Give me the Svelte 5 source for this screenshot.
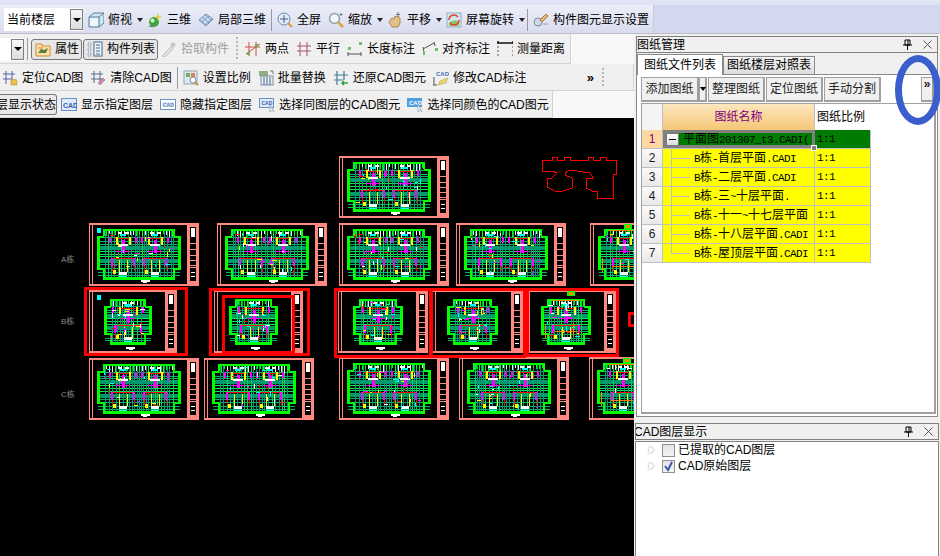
<script>
  const ic = {
    cube: '<path d="M1 5 6 1h10v10l-5 4H1z" fill="#cfe6f5" stroke="#5a7f98"/><path d="M1 5h10v10M11 5l5-4" fill="none" stroke="#5a7f98"/><path d="M2 6h8v8H2z" fill="#eef7fc"/>',
    sphere: '<circle cx="7" cy="10" r="5" fill="#3fa63f"/><circle cx="5.5" cy="8.5" r="2" fill="#d8f5c8"/><path d="M11 1l1 3 3 1-3 1-1 3-1-3-3-1 3-1z" fill="#e8c84a"/><path d="M2 14l4 1" stroke="#667" />',
    diamond: '<path d="M1 8 8 2l7 5-7 7z" fill="#c8dcf2" stroke="#6f8fb5"/><path d="M4 5l7 6M7 3l6 5M2 8l6 5M11 4l-7 6M14 7l-6 5" stroke="#7e9cc2" fill="none"/>',
    full: '<circle cx="7" cy="7" r="6" fill="#e3edf8" stroke="#6b87ab"/><path d="M7 3v8M3 7h8" stroke="#3d5f8f"/><path d="M11 11l4 4" stroke="#d99a3a" stroke-width="2"/>',
    zoom: '<circle cx="6.500" cy="6.500" r="5" fill="#f2f6fa" stroke="#8fa0b0" stroke-width="1.500"/><path d="M10.500 10.500l4.500 4.500" stroke="#d8a830" stroke-width="2.500"/><path d="M13 1v3M11.500 2.500h3" stroke="#5a7fa8"/>',
    hand: '<path d="M2 10l3-4 2 1 1-3 2 1 1-1 2 2v5l-2 4H5z" fill="#e3c28a" stroke="#a8874f"/><path d="M11 0v5M9 2.500h4" stroke="#667788"/>',
    rotate: '<rect x="1" y="1" width="14" height="14" fill="#cfe7f2" stroke="#8fb0c2"/><path d="M3 11c3-3 7-3 10-1v4H3z" fill="#8fc56a"/><path d="M3 8a5 5 0 0 1 9-3M13 8a5 5 0 0 1-9 3" fill="none" stroke="#e0452c" stroke-width="1.500"/>',
    wand: '<circle cx="5" cy="10" r="4" fill="#cfd8e6" stroke="#7d8ca3"/><path d="M7 8l6-6 2 2-6 6z" fill="#e8b878" stroke="#a5763d"/><path d="M10 12h5" stroke="#999"/>',
    prop: '<path d="M1 3h6v2h8v10H1z" fill="#fbe1ad" stroke="#d88a28"/><path d="M3 12l3-4 3 1 4-2-2 5z" fill="#5b7f3b"/><path d="M3 7h5" stroke="#d88a28"/>',
    list: '<path d="M1 2h3v3H1zM1 7h3v3H1zM1 12h3v3H1z" fill="none" stroke="#7c8ea3" stroke-dasharray="1 1"/><rect x="7" y="1" width="8" height="14" fill="#eef3fa" stroke="#49688f"/><path d="M9 4h4M9 7h4M9 10h4M9 13h4" stroke="#49688f"/>',
    drop: '<path d="M2 14l8-8 2 2-8 8H2z" fill="#e4e4e4" stroke="#bdbdbd"/><path d="M9 4l3-3 3 3-3 3z" fill="#c6c6c6"/>',
    two: '<path d="M1 13 15 3M4 1v14M11 1v14M0 6h15" stroke="#c8503c" fill="none"/><rect x="2" y="11" width="3" height="3" fill="#70b050"/><rect x="10" y="3" width="3" height="3" fill="#70b050"/>',
    par: '<path d="M4 1v14M11 1v14M1 5h14M1 10h14" stroke="#a8506c" fill="none"/>',
    len: '<path d="M1 11v4M14 11v4M1 13h13" stroke="#555" fill="none"/><rect x="1" y="6" width="3" height="3" fill="#70c070"/><rect x="12" y="1" width="3" height="3" fill="#70c070"/>',
    align: '<path d="M1 8l11-6M2 11 1 6M13 5l-1-4" stroke="#555" fill="none"/><rect x="1" y="11" width="2" height="3" fill="#70c070"/><rect x="13" y="7" width="3" height="3" fill="#70c070"/>',
    meas: '<path d="M1 0v3M16 0v3M1 2h15" stroke="#111" stroke-width="1.500" fill="none"/><path d="M1 5v11M16 5v11" stroke="#555" stroke-dasharray="2 2"/>',
    loc: '<path d="M4 1v13M10 1v8M1 4h12M1 9h9" stroke="#5a5fa8" fill="none"/><path d="M9 15v-5h1v-1l1 1 1-1 1 1 1-1 1 2v4z" fill="#e8c050" stroke="#b08a2a" stroke-width=".5"/>',
    clr: '<path d="M4 1v12M10 1v12M1 4h12M1 9h12" stroke="#4f6f8f" fill="none"/><path d="M8 13l5-5 2 2-5 5z" fill="#d58ab0" stroke="#8a5f7a" stroke-width=".5"/>',
    scale: '<rect x="1" y="1" width="13" height="13" fill="#dbe8f2" stroke="#8da4b8"/><rect x="3" y="3" width="4" height="4" fill="#6db05a"/><rect x="8" y="3" width="4" height="4" fill="#e0805a"/><circle cx="10" cy="10" r="3" fill="#fff" stroke="#7d8ca3"/><path d="M12 12l3 3" stroke="#d09030" stroke-width="2"/>',
    batch: '<rect x="1" y="1" width="9" height="5" fill="#8fb080"/><rect x="3" y="6" width="12" height="9" fill="#e8eef4" stroke="#7d8ca3"/><path d="M6 7v8M9 7v8M12 7v8" stroke="#49688f"/><path d="M12 1h3v3" fill="none" stroke="#777"/>',
    rest: '<path d="M4 1v14M11 1v9M1 5h14M1 10h9" stroke="#3f7f95" stroke-width="1.200" fill="none"/><path d="M15 13H9m2-2-2 2 2 2" fill="none" stroke="#2f9f3f" stroke-width="1.500"/>',
    mod: '<text x="3" y="6" font-size="6" font-weight="700" fill="#3f6fc0" font-family="Liberation Sans">CAD</text><path d="M1 7v8M0 15h4" stroke="#555" fill="none"/><path d="M5 15l2-4 8-3-2 5z" fill="#f0d070" stroke="#b09a50" stroke-width=".5"/>',
    cadA: '<rect x=".5" y="1.500" width="15" height="12" fill="#dfeafa" stroke="#6a8fc0"/><text x="2" y="11" font-size="7" font-weight="700" fill="#2f5fb0" font-family="Liberation Sans">CAD</text>',
    cadB: '<rect x=".5" y="2.500" width="15" height="10" fill="#fff" stroke="#6a8fc0"/><rect x="2" y="5" width="12" height="5" fill="#dfeafa"/><text x="3" y="9.500" font-size="5" font-weight="700" fill="#5f7fb0" font-family="Liberation Sans">CAD</text>',
    cadC: '<rect x=".5" y="1.500" width="14" height="9" fill="#dfeafa" stroke="#6a8fc0"/><text x="2.500" y="8" font-size="5" font-weight="700" fill="#2f5fb0" font-family="Liberation Sans">CAD</text><path d="M11 8v7l2-2 2 2z" fill="#fff" stroke="#8a9aaa" stroke-width=".7"/>',
    cadD: '<rect x="0" y="1" width="15" height="9" fill="#4f9fe0"/><text x="2" y="8" font-size="6" font-weight="700" fill="#fff" font-family="Liberation Sans">CAD</text><path d="M11 7v8l2-2 2 2z" fill="#fff" stroke="#8a9aaa" stroke-width=".7"/>'
  };

  const row1 = [
    { i: 'cube', t: '俯视', caret: true },
    { i: 'sphere', t: '三维' },
    { i: 'diamond', t: '局部三维' },
    { sep: true },
    { i: 'full', t: '全屏' },
    { i: 'zoom', t: '缩放', caret: true },
    { i: 'hand', t: '平移', caret: true },
    { i: 'rotate', t: '屏幕旋转', caret: true },
    { sep: true },
    { i: 'wand', t: '构件图元显示设置' }
  ];
  const row2 = [
    { i: 'two', t: '两点' },
    { i: 'par', t: '平行' },
    { i: 'len', t: '长度标注' },
    { i: 'align', t: '对齐标注' },
    { i: 'meas', t: '测量距离' }
  ];
  const row3 = [
    { i: 'loc', t: '定位CAD图' },
    { i: 'clr', t: '清除CAD图' },
    { sep: true },
    { i: 'scale', t: '设置比例' },
    { i: 'batch', t: '批量替换' },
    { i: 'rest', t: '还原CAD图元' },
    { i: 'mod', t: '修改CAD标注' }
  ];
  const row4 = [
    { i: 'cadA', t: '显示指定图层' },
    { i: 'cadB', t: '隐藏指定图层' },
    { i: 'cadC', t: '选择同图层的CAD图元' },
    { i: 'cadD', t: '选择同颜色的CAD图元' }
  ];

  const drawings = [
    { n: '平面图201307_t3.CADI(', r: '1:1' },
    { n: 'B栋-首层平面.CADI', r: '1:1' },
    { n: 'B栋-二层平面.CADI', r: '1:1' },
    { n: 'B栋-三~十层平面.', r: '1:1' },
    { n: 'B栋-十一~十七层平面', r: '1:1' },
    { n: 'B栋-十八层平面.CADI', r: '1:1' },
    { n: 'B栋-屋顶层平面.CADI', r: '1:1' }
  ];

  // split a label so latin runs get the narrow mono of the grid
  const parts = (s) => s.split(/([\x00-\x7f]+)/).filter(Boolean);
  const isLatin = (s) => /^[\x00-\x7f]/.test(s);

  const PINK = '#ff8880';
  const sheets = [
    { x: 339, y: 156, w: 110, h: 62, seed: 3 },
    { x: 89, y: 223, w: 110, h: 63, seed: 5, offset: true },
    { x: 217, y: 223, w: 110, h: 63, seed: 7 },
    { x: 339, y: 223, w: 110, h: 63, seed: 11 },
    { x: 456, y: 223, w: 110, h: 63, seed: 13 },
    { x: 590, y: 223, w: 110, h: 63, seed: 17, tower: true },
    { x: 89, y: 290, w: 88, h: 63, seed: 19, narrow: true, offset: true },
    { x: 214, y: 290, w: 89, h: 63, seed: 23, narrow: true },
    { x: 338, y: 290, w: 90, h: 63, seed: 29, narrow: true },
    { x: 432, y: 290, w: 91, h: 63, seed: 31, narrow: true },
    { x: 526, y: 290, w: 90, h: 63, seed: 37, narrow: true, tower: true },
    { x: 89, y: 358, w: 110, h: 62, seed: 41 },
    { x: 204, y: 358, w: 110, h: 62, seed: 43 },
    { x: 339, y: 357, w: 110, h: 63, seed: 47 },
    { x: 459, y: 357, w: 110, h: 63, seed: 53 },
    { x: 589, y: 357, w: 110, h: 63, seed: 59, tower: true }
  ];
  const redFrames = [
    [85, 288, 101, 66], [210, 289, 98, 65], [223, 296, 70, 56],
    [335, 289, 95, 67], [431, 289, 93, 67], [527, 289, 90, 66], [629, 313, 6, 12]
  ];
  const outline = '542,160 552,160 552,157 557,157 557,160 564,160 564,157 570,157 570,160 588,160 588,157 593,157 593,160 600,160 600,157 606,157 606,160 616,160 616,174 613,174 613,198 597,198 597,191 592,191 586,188 586,178 593,178 590,173 570,170 565,173 565,175 572,178 572,188 563,191 555,191 547,187 547,178 552,178 557,173 552,171 542,171';

  function build(s) {
    let seed = s.seed * 77;
    const rnd = () => (seed = (seed * 9301 + 49297) % 233280) / 233280;
    const out = [];
    const add = (x, y, w, h, c) => out.push({ x: Math.round(x), y: Math.round(y), w: Math.round(w), h: Math.round(h), c });
    const L = s.narrow ? 15 : 8;
    const R = s.narrow ? s.w - 25 : s.w - 18;
    const B0 = L + 6, B1 = R - 6, T = s.narrow ? 9 : 6, Bt = s.h - (s.narrow ? 10 : 8);
    const wT = T + 7, wB = Bt - 10;
    const midY = (T + Bt) / 2;
    const H = Bt - T;

    // horizontal bands
    add(L + 1, T + H * 0.34, R - L - 2, 4, '#009a68');
    add(L + 1, T + H * 0.62, R - L - 2, 4, '#009a68');
    for (const f of [0.16, 0.24, 0.3, 0.44, 0.5, 0.56, 0.72, 0.8, 0.88, 0.94]) add(L + 1, T + H * f, R - L - 2, 1, f > 0.4 && f < 0.6 ? '#00f050' : '#00b860');
    // vertical walls
    for (let x = B0 + 2; x < B1 - 1; x += 2 + Math.floor(rnd() * 3)) {
      add(x, T + 2, 1, H - 3, rnd() > 0.8 ? '#00d060' : '#009a78');
    }
    // green outline with wings
    add(B0, T, B1 - B0, 2, '#00ff00');
    add(B0, Bt - 1, B1 - B0, 3, '#00ff00');
    add(B0, T, 2, wT - T, '#00ff00');
    add(B1 - 2, T, 2, wT - T, '#00ff00');
    add(B0, wB, 2, Bt - wB, '#00ff00');
    add(B1 - 2, wB, 2, Bt - wB, '#00ff00');
    add(L, wT, B0 - L + 1, 2, '#00ff00');
    add(B1 - 1, wT, R - B1 + 1, 2, '#00ff00');
    add(L, wB, B0 - L + 1, 2, '#00ff00');
    add(B1 - 1, wB, R - B1 + 1, 2, '#00ff00');
    add(L, wT, 3, wB - wT + 2, '#00ff00');
    add(R - 3, wT, 3, wB - wT + 2, '#00ff00');
    // top ticks
    for (let x = B0 + 3; x < B1 - 2; x += 3) add(x, T + 2, 1, 3 + rnd() * 4, rnd() > 0.65 ? '#ffffff' : '#00ff00');

    const centers = s.narrow ? [0.5] : [0.28, 0.72];
    for (const f of centers) {
      const c = B0 + (B1 - B0) * f;
      const rw = s.narrow ? 13 : 11;
      // red unit outlines
      add(c - rw, midY + 4, rw * 2, 1, '#ff0000');
      add(c - rw, midY + 4, 1, 13, '#ff0000');
      add(c + rw, midY + 4, 1, 13, '#ff0000');
      add(c - rw + 2, T + 9, rw * 2 - 4, 1, '#ff0000');
      // magenta walls
      add(c - rw - 3, T + 8, 2, 6, '#ff00ff');
      add(c + rw + 1, T + 8, 2, 6, '#ff00ff');
      add(c - 1, T + 11, 3, 13, '#ff00ff');
      add(c - rw - 1, midY + 4, 2, 8, '#ff00ff');
      add(c + rw - 1, midY + 4, 2, 8, '#ff00ff');
      add(c - 7, midY - 3, 14, 1, '#ff00ff');
      // yellow
      add(c - rw + 4, T + 8, 2, 8, '#ffff00');
      add(c + rw - 5, T + 8, 2, 8, '#ffff00');
      add(c - 4, midY + 6, 1, 12, '#ffff00');
      add(c + 4, midY + 6, 1, 12, '#ffff00');
      add(c - rw + 1, Bt - 8, 3, 4, '#ffff00');
      // white fixtures
      add(c - 5, T + 3, 4, 2, '#ffffff');
      add(c + 2, T + 3, 4, 2, '#ffffff');
      add(c - 5, T + 15, 10, 2, '#ffffff');
      add(c - 4, Bt - 6, 8, 3, '#ffffff');
      // cyan stairs
      add(c - 3, T + 5, 6, 2, '#00ffff');
      add(c - 4, Bt - 2, 8, 1, '#00ffff');
    }
    // scattered details
    const bits = ['#ff00ff', '#ffff00', '#ff0000', '#ffffff', '#00ffff'];
    for (let n = 0; n < 22; n++) {
      const vert = rnd() > 0.5;
      add(B0 + rnd() * (B1 - B0 - 4), T + 3 + rnd() * (H - 8), vert ? 1 : 2 + rnd() * 3, vert ? 2 + rnd() * 3 : 1, bits[Math.floor(rnd() * 5)]);
    }
    if (s.tower) {
      add(L + 12, T + 1, 26, 1, '#ff8000');
      add(L + 4, midY + 4, 1, 14, '#ff8000');
      add(R - 18, midY + 2, 1, 14, '#ff8000');
      add(L + 14, Bt - 12, 22, 1, '#ff8000');
      add(L + 26, 1, 8, 5, '#00ff00');
      add(L + 28, 2, 4, 3, '#ff8000');
    }
    // bottom title mark
    add(s.w * (s.narrow ? 0.42 : 0.47), s.h - 6, 9, 2, '#ffffff');
    add(s.w * (s.narrow ? 0.45 : 0.49), s.h - 4, 4, 1, '#ffffff');
    return out;
  }

  function titleBlock(s) {
    const x = s.w - 11, cells = [];
    for (const f of [0.32, 0.42, 0.5, 0.58, 0.66, 0.7]) cells.push(Math.round(s.h * f));
    return { x, cells };
  }
</script>

{#snippet tool(t)}
  {#if t.sep}
    <span class="sep"></span>
  {:else}
    <span class="tool">
      <svg class="icon" viewBox="0 0 16 16">{@html ic[t.i]}</svg>
      <span>{t.t}</span>
      {#if t.caret}<span class="caret"></span>{/if}
    </span>
  {/if}
{/snippet}

{#snippet panelTitle(text)}
  <div class="ptitle">
    <span class="ptext">{text}</span>
    <svg class="pin" viewBox="0 0 10 11"><path d="M3 1h5v5H3zM1 6h9M5.500 6v5M6 1v5" fill="none" stroke="#000" /></svg>
    <svg class="close" viewBox="0 0 9 9"><path d="M.5.5l8 8M8.500.5l-8 8" stroke="#555" fill="none" /></svg>
  </div>
{/snippet}

<div class="app">
  <div class="strip"></div>
  <div class="bar1">
    <div class="bar1in">
      <div class="combo floors"><span>当前楼层</span><span class="dd"><i></i></span></div>
      {#each row1 as t}{@render tool(t)}{/each}
    </div>
  </div>

  <div class="main">
    <div class="left">
      <div class="tb tb2">
        <div class="combo stub"><span class="dd"><i></i></span></div>
        <span class="sep"></span>
        <div class="toggles">
          <span class="tog"><svg class="icon" viewBox="0 0 16 16">{@html ic.prop}</svg>属性</span>
          <span class="tog"><svg class="icon" viewBox="0 0 16 16">{@html ic.list}</svg>构件列表</span>
        </div>
        <span class="tool off"><svg class="icon" viewBox="0 0 16 16">{@html ic.drop}</svg>拾取构件</span>
        <span class="grip"></span>
        {#each row2 as t}{@render tool(t)}{/each}
      </div>
      <div class="tb tb3">
        {#each row3 as t}{@render tool(t)}{/each}
        <span class="more">»</span>
        <span class="grip"></span>
      </div>
      <div class="tb tb4">
        <span class="state">层显示状态</span>
        {#each row4 as t}{@render tool(t)}{/each}
      </div>

      <div class="canvas">
        <svg class="cad" viewBox="0 118 634 438">
          {#each sheets as s}
            {@const tb = titleBlock(s)}
            <g transform="translate({s.x} {s.y})">
              <rect width={s.w} height={s.h} fill={PINK} />
              <rect x="1" y="2" width="2" height={s.h - 4} fill="#000" />
              <rect x="4" y="2" width={s.w - 16} height={s.h - 4} fill="#000" />
              {#each build(s) as r}
                <rect x={r.x} y={r.y} width={r.w} height={r.h} fill={r.c} />
              {/each}
              <rect x={tb.x + 2} y="4" width="6" height={s.h - 9} fill="#000" />
              <rect x={tb.x + 3} y="5" width="4" height="9" fill="#fff" />
              {#each tb.cells as cy}
                <rect x={tb.x + 2} y={cy} width="6" height="1" fill={PINK} />
              {/each}
              <rect x={tb.x + 3} y={s.h - 14} width="4" height="1" fill="#fff" />
              <rect x={tb.x + 3} y={s.h - 10} width="4" height="1" fill="#fff" />
              {#if s.offset}
                <rect x="8" y="5" width="4" height="5" fill="#00ffff" />
              {/if}
            </g>
          {/each}
          {#each redFrames as f}
            <rect x={f[0]} y={f[1]} width={f[2]} height={f[3]} fill="none" stroke="#ff0000" stroke-width="3" />
          {/each}
          <polygon points={outline} fill="none" stroke="#ff0000" />
          <text x="61" y="262" class="mark">A栋</text>
          <text x="61" y="324" class="mark">B栋</text>
          <text x="61" y="397" class="mark">C栋</text>
        </svg>
      </div>
    </div>

    <div class="right">
      <div class="panel top">
        {@render panelTitle('图纸管理')}
        <div class="tabs">
          <span class="tab on">图纸文件列表</span>
          <span class="tab">图纸楼层对照表</span>
        </div>
        <div class="actions">
          <span class="act w58">添加图纸</span>
          <span class="act drop"><i></i></span>
          <span class="act w57">整理图纸</span>
          <span class="act w57">定位图纸</span>
          <span class="act w57">手动分割</span>
          <span class="act morebtn">»</span>
        </div>
        <div class="gridbox">
          <div class="gr head">
            <span class="num"></span>
            <span class="name">图纸名称</span>
            <span class="ratio">图纸比例</span>
          </div>
          {#each drawings as d, i}
            <div class="gr" class:sel={i === 0}>
              <span class="num">{i + 1}</span>
              <span class="name" class:child={i > 0}>
                {#if i === 0}
                  <span class="minus"></span>
                {:else}
                  <span class="branch" class:last={i === 6}></span>
                {/if}
                <span class="nm">{#each parts(d.n) as p}{#if isLatin(p)}<span class="lat">{p}</span>{:else}{p}{/if}{/each}</span>
              </span>
              <span class="ratio lat">{d.r}</span>
            </div>
          {/each}
        </div>
      </div>

      <div class="panel bottom">
        {@render panelTitle('CAD图层显示')}
        <div class="layers">
          <div class="layer">
            <span class="tri"></span>
            <span class="chk"></span>
            <span>已提取的CAD图层</span>
          </div>
          <div class="layer">
            <span class="tri"></span>
            <span class="chk">
              <svg viewBox="0 0 11 11"><path d="M2 5l3 4 4-8" fill="none" stroke="#3a5aa8" stroke-width="2" /></svg>
            </span>
            <span>CAD原始图层</span>
          </div>
        </div>
      </div>
    </div>
  </div>

  <div class="ring"></div>
</div>

<style>
  :global(body) {
    margin: 0;
  }

  .app {
    position: relative;
    width: 940px;
    height: 556px;
    overflow: hidden;
    display: flex;
    flex-direction: column;
    background: #f0f0f0;
    font: 12px/16px 'Liberation Sans', 'Noto Sans CJK SC', sans-serif;
    color: #000;
  }

  .strip {
    height: 5px;
    background: linear-gradient(#e3e6f5, #dde1f2);
    flex: none;
  }

  .bar1 {
    height: 29px;
    flex: none;
    background: #d3d8ee;
    border-bottom: 1px solid #b9bdcc;
    box-sizing: border-box;
  }

  .bar1in {
    width: 654px;
    height: 100%;
    display: flex;
    align-items: center;
    gap: 7px;
    padding: 1px 0 0 4px;
    box-sizing: border-box;
    background: linear-gradient(#eceef8, #d9dcee);
    border-right: 1px solid #c8cce0;
  }

  .combo {
    display: flex;
    align-items: center;
    justify-content: space-between;
    background: #fff;
    height: 23px;
    box-sizing: border-box;
    white-space: nowrap;
    flex: none;
  }

  .floors {
    width: 79px;
    padding-left: 3px;
    margin-right: -2px;
  }

  .stub {
    width: 24px;
    justify-content: flex-end;
    margin-right: -2px;
  }

  .dd {
    width: 13px;
    height: 21px;
    display: flex;
    align-items: center;
    justify-content: center;
    border: 1px solid #7f7f7f;
    background: linear-gradient(#f8f8f8, #dcdcdc);
    box-sizing: border-box;
  }

  .dd i,
  .drop i {
    border: 4px solid transparent;
    border-top-color: #000;
    border-bottom: 0;
  }

  .tool {
    display: inline-flex;
    align-items: center;
    gap: 4px;
    white-space: nowrap;
    flex: none;
  }

  .tool.off {
    color: #a0a0a0;
    margin-left: -4px;
  }

  .icon {
    width: 16px;
    height: 16px;
    flex: none;
  }

  .caret {
    width: 0;
    height: 0;
    margin: 0 -3px 0 1px;
    border: 3px solid transparent;
    border-top: 4px solid #222;
    border-bottom: 0;
  }

  .sep {
    width: 1px;
    height: 22px;
    margin: 0 -2px;
    background: #9a9a9a;
    flex: none;
  }

  .main {
    flex: 1;
    display: flex;
    min-height: 0;
  }

  .left {
    width: 634px;
    flex: none;
    display: flex;
    flex-direction: column;
    background: #f8f8f8;
  }

  .tb {
    display: flex;
    align-items: center;
    gap: 7px;
    background: #f0f0f0;
    flex: none;
    box-sizing: border-box;
    padding-top: 1px;
    border-bottom: 1px solid #d4d4d4;
    border-right: 1px solid #d4d4d4;
  }

  .tb2 {
    height: 30px;
    width: 571px;
  }

  .tb3 {
    height: 27px;
    padding: 2px 0 0 2px;
    position: relative;
  }

  .tb4 {
    height: 27px;
    width: 553px;
  }

  .toggles {
    display: flex;
    gap: 1px;
    margin-left: -2px;
    flex: none;
  }

  .tog {
    display: inline-flex;
    align-items: center;
    gap: 4px;
    height: 21px;
    padding: 0 2px 0 3px;
    box-sizing: border-box;
    border: 1px solid #777;
    border-radius: 3px;
    background: #e6e6e6;
    white-space: nowrap;
  }

  .grip {
    width: 2px;
    height: 24px;
    background: repeating-linear-gradient(#b5b5b5 0 2px, transparent 2px 4px);
    flex: none;
  }

  .more {
    margin-left: auto;
    font-weight: 700;
    font-size: 13px;
    margin-right: 1px;
  }

  .tb3 .grip {
    margin-right: 29px;
    height: 20px;
  }

  .state {
    width: 57px;
    height: 21px;
    flex: none;
    box-sizing: border-box;
    border: 1px solid #777;
    border-left: 0;
    border-radius: 0 3px 3px 0;
    background: #eaeaea;
    direction: rtl;
    overflow: hidden;
    white-space: nowrap;
    margin-right: -3px;
    line-height: 20px;
  }

  .canvas {
    flex: 1;
    background: #000;
    min-height: 0;
    overflow: hidden;
  }

  .cad {
    display: block;
    width: 634px;
    height: 438px;
    shape-rendering: crispEdges;
  }

  .mark {
    font-size: 8px;
    fill: #8a8a8a;
  }

  .right {
    width: 306px;
    flex: none;
    display: flex;
    flex-direction: column;
    padding: 2px 2px 0 2px;
    box-sizing: border-box;
    background: #f0f0f0;
  }

  .panel {
    display: flex;
    flex-direction: column;
  }

  .top {
    height: 381px;
    flex: none;
    border-bottom: 1px solid #8a8a8a;
    border-left: 1px solid #8a8a8a;
    border-right: 1px solid #8a8a8a;
    box-sizing: border-box;
    background: #fff;
  }

  .bottom {
    flex: 1;
    margin-top: 6px;
  }

  .ptitle {
    height: 15px;
    display: flex;
    align-items: center;
    border: 1px solid #808080;
    background: #f0f0f0;
    flex: none;
    margin: 0 -1px;
    overflow: hidden;
  }

  .ptext {
    flex: 1;
    line-height: 14px;
    white-space: nowrap;
  }

  .bottom .ptext {
    margin-left: -2px;
  }

  .pin {
    width: 10px;
    height: 11px;
    margin-right: 11px;
  }

  .close {
    width: 9px;
    height: 9px;
    margin-right: 5px;
  }

  .tabs {
    display: flex;
    align-items: flex-end;
    height: 21px;
    flex: none;
    background: #f0f0f0;
    border-bottom: 1px solid #8a8a8a;
  }

  .tab {
    height: 17px;
    padding: 0 3px;
    line-height: 17px;
    border: 1px solid #8a8a8a;
    border-bottom: 0;
    background: linear-gradient(#f4f4f4, #dcdcdc);
    white-space: nowrap;
  }

  .tab.on {
    height: 20px;
    line-height: 20px;
    padding: 0 6px;
    background: #fff;
    margin-bottom: -1px;
    position: relative;
  }

  .actions {
    display: flex;
    gap: 1px;
    height: 25px;
    margin: 2px 0 0 4px;
    flex: none;
    background: #fff;
  }

  .act {
    display: flex;
    align-items: center;
    justify-content: center;
    box-sizing: border-box;
    height: 25px;
    border: 1px solid #a0a0a0;
    border-right-width: 2px;
    border-bottom-width: 2px;
    background: #f0f0f0;
    color: #222;
  }

  .w58 {
    width: 58px;
  }

  .w57 {
    width: 57px;
  }

  .drop {
    width: 8px;
    margin-left: -1px;
  }

  .drop i {
    border-width: 3px;
    border-top-width: 4px;
  }

  .morebtn {
    width: 13px;
    margin-left: auto;
    margin-right: 3px;
    font-weight: 700;
    align-items: flex-start;
    line-height: 12px;
  }

  .gridbox {
    margin: 1px 1px 2px 4px;
    flex: 1;
    border: 1px solid #a0a0a0;
    border-right-width: 2px;
    border-bottom-width: 2px;
    background: #fff;
    overflow: hidden;
  }

  .gr {
    display: flex;
    height: 19px;
    width: 229px;
    background: #ffff00;
    box-sizing: border-box;
    border-bottom: 1px solid #c0c0c0;
    line-height: 18px;
  }

  .gr > span {
    box-sizing: border-box;
    border-right: 1px solid #c0c0c0;
    flex: none;
    white-space: nowrap;
  }

  .num {
    width: 21px;
    text-align: center;
    background: linear-gradient(#fbfbfb, #e8e8e8);
    color: #222;
  }

  .name {
    width: 152px;
    position: relative;
    overflow: hidden;
    display: flex;
    align-items: center;
  }

  .ratio {
    width: 56px;
    padding-left: 2px;
  }

  .head {
    height: 26px;
    background: #fff;
    line-height: 26px;
    border: 0;
  }

  .head .num {
    background: #f4f4f4;
  }

  .head .name {
    justify-content: center;
    color: #800080;
    background: linear-gradient(#fde7be, #f5c777);
  }

  .head .ratio {
    border-right: 0;
    background: #fff;
  }

  .sel .num {
    background: #fdd8a0;
    color: #800080;
  }

  .sel .name {
    background: #007d00;
    color: #000;
    outline: 3px solid #808080;
    outline-offset: -3px;
    padding-left: 3px;
    overflow: visible;
    z-index: 1;
  }

  .sel .name::after {
    content: '';
    position: absolute;
    right: -3px;
    bottom: -3px;
    width: 4px;
    height: 4px;
    background: #808080;
    border: 1px solid #fff;
  }

  .sel .ratio {
    background: #007d00;
  }

  .minus {
    width: 13px;
    height: 13px;
    flex: none;
    margin-right: 4px;
    box-sizing: border-box;
    border: 1px solid #777;
    background: linear-gradient(#fff, #ddd) no-repeat;
    position: relative;
  }

  .minus::after {
    content: '';
    position: absolute;
    left: 2px;
    right: 2px;
    top: 5px;
    height: 1px;
    background: #000;
  }

  .sel .nm {
    overflow: hidden;
    max-width: 129px;
  }

  .child {
    padding-left: 31px;
  }

  .branch {
    position: absolute;
    left: 8px;
    top: 0;
    width: 18px;
    height: 9px;
    border-left: 1px solid #c0c0c0;
    border-bottom: 1px solid #c0c0c0;
  }

  .branch:not(.last)::after {
    content: '';
    position: absolute;
    left: -1px;
    top: 9px;
    height: 10px;
    width: 1px;
    background: #c0c0c0;
  }

  .lat {
    font: 11px/18px 'Liberation Mono', monospace;
    letter-spacing: -0.6px;
  }

  .layers {
    flex: 1;
    background: #fff;
    border: 1px solid #808080;
    border-bottom: 0;
    margin: 1px -1px 0;
  }

  .layer {
    display: flex;
    align-items: center;
    height: 16px;
    gap: 3px;
    padding-left: 13px;
  }

  .tri {
    width: 0;
    height: 0;
    border: 4px solid transparent;
    border-left: 5px solid #fff;
    border-right: 0;
    filter: drop-shadow(0 0 1px #888);
    margin-right: 5px;
  }

  .chk {
    width: 13px;
    height: 13px;
    box-sizing: border-box;
    border: 1px solid #8f8f8f;
    background: linear-gradient(#e4e4e4, #f4f4f4);
    flex: none;
  }

  .chk svg {
    display: block;
    width: 11px;
    height: 11px;
  }

  .ring {
    position: absolute;
    left: 895px;
    top: 55px;
    width: 46px;
    height: 70px;
    box-sizing: border-box;
    border: 7px solid #3a5fcd;
    border-radius: 50%;
    pointer-events: none;
  }
</style>
